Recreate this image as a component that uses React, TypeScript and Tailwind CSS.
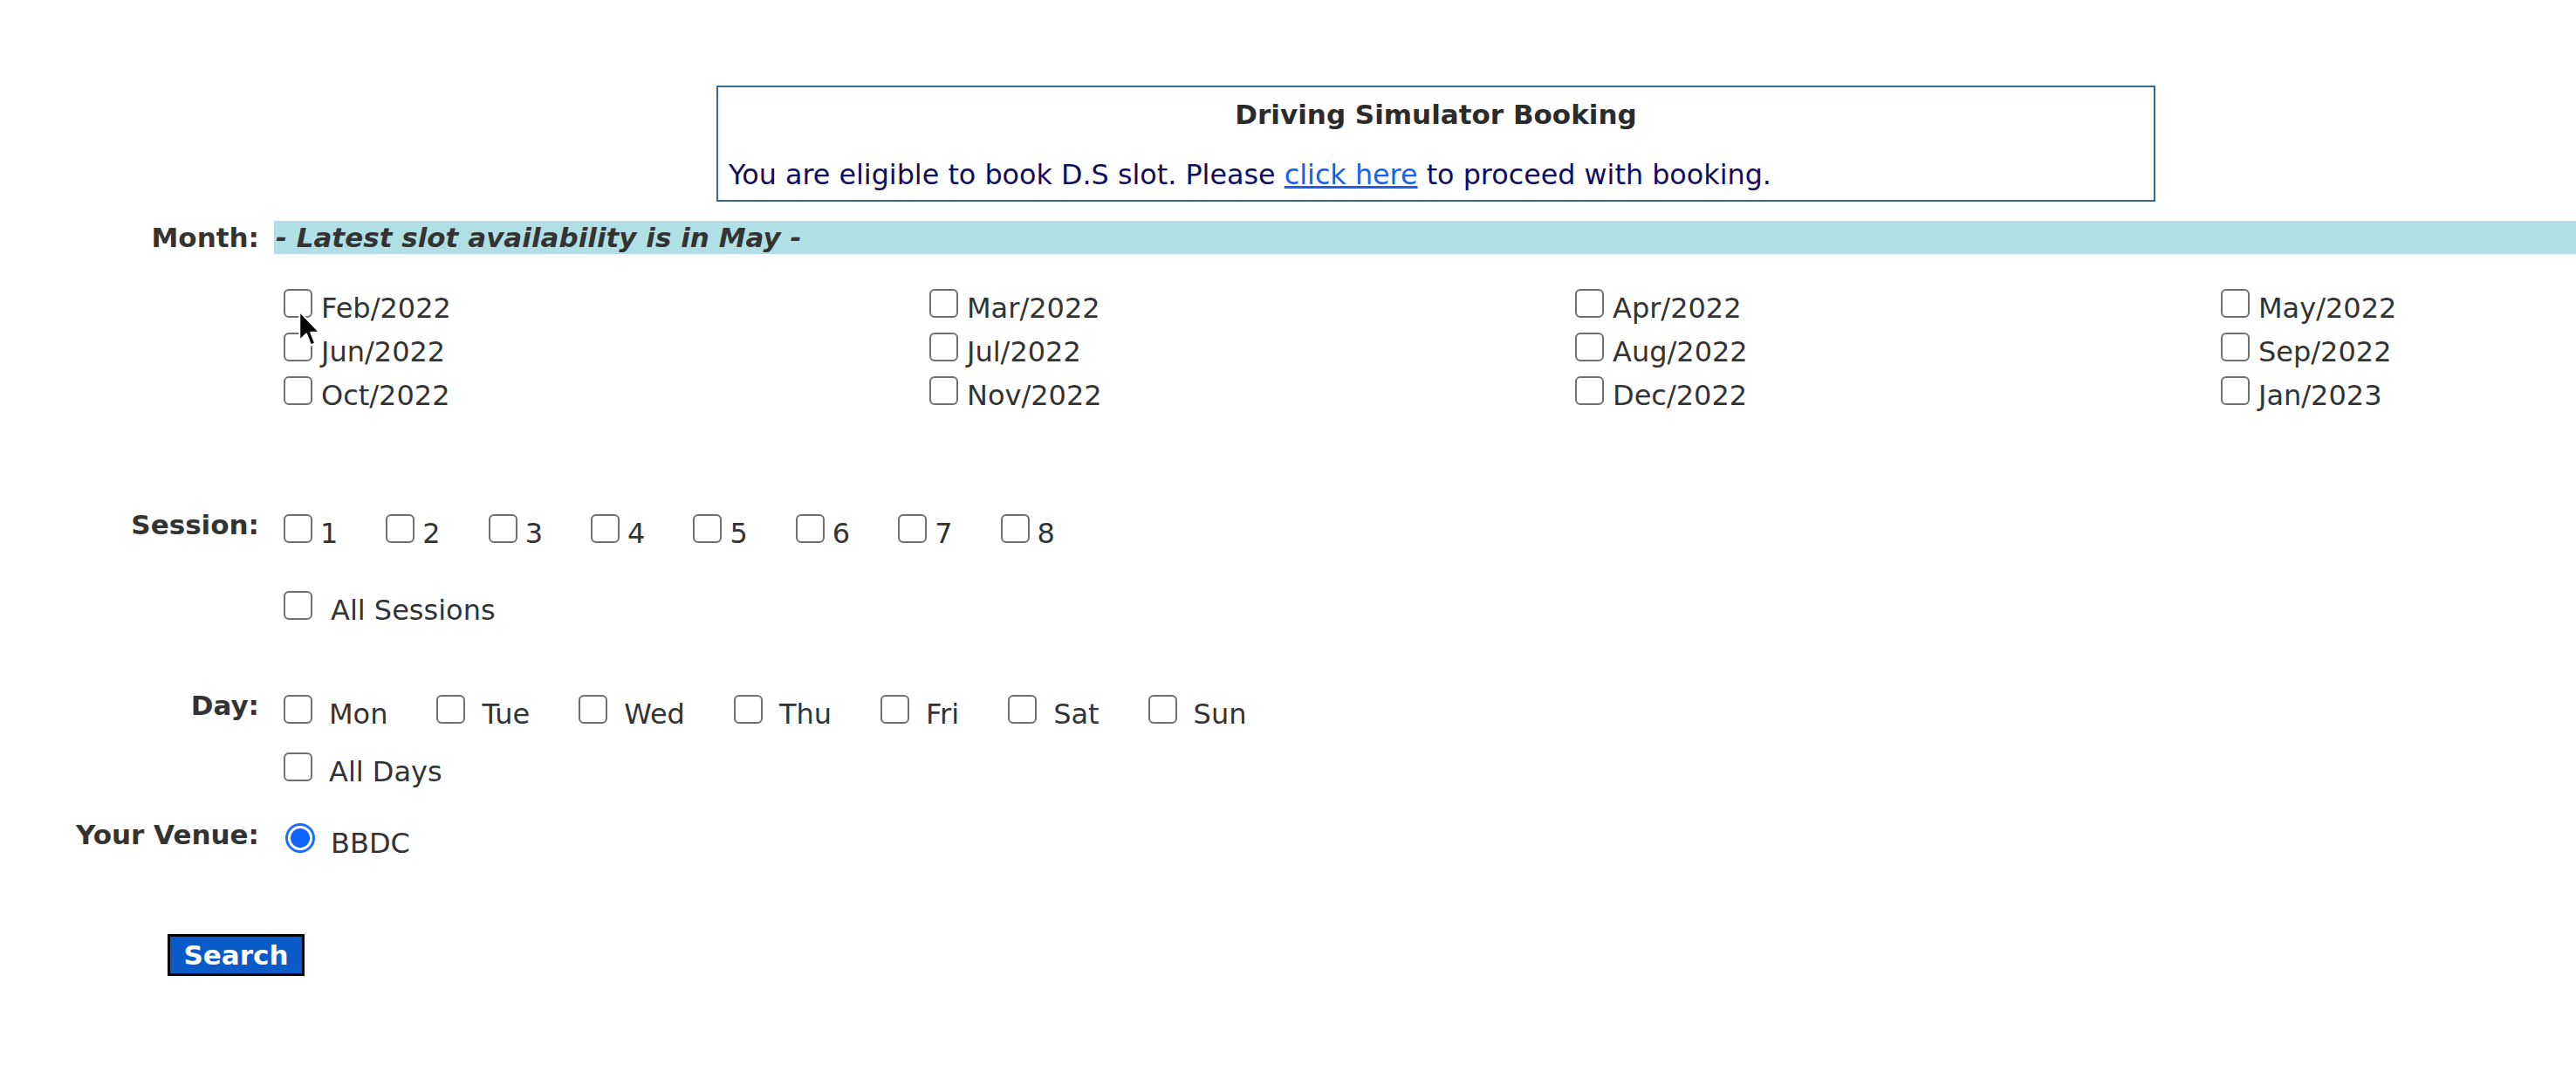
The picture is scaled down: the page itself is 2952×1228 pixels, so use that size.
import React from "react";

const months = [
  "Feb/2022", "Mar/2022", "Apr/2022", "May/2022",
  "Jun/2022", "Jul/2022", "Aug/2022", "Sep/2022",
  "Oct/2022", "Nov/2022", "Dec/2022", "Jan/2023",
];
const sessions = ["1", "2", "3", "4", "5", "6", "7", "8"];
const days = ["Mon", "Tue", "Wed", "Thu", "Fri", "Sat", "Sun"];

const cb =
  "appearance-none inline-block align-baseline w-[33px] h-[33px] border-2 border-[#707070] rounded-[6px] bg-white";

function Cursor() {
  return (
    <svg
      className="absolute left-[341px] top-[355px] w-[27px] h-[45px]"
      viewBox="0 0 24 40"
    >
      <path
        d="M2 1.5 L2 31 L9 24.5 L13.5 36 L18 34 L13.5 23 L22.5 23 Z"
        fill="#000"
        stroke="#fff"
        strokeWidth="1.8"
        strokeLinejoin="round"
      />
    </svg>
  );
}

export default function App() {
  return (
    <div className="relative w-full min-h-[1228px] overflow-hidden bg-white font-['DejaVu_Sans',Verdana,sans-serif] text-[32px] text-[#333]">
      <div className="pt-[98px]">
        <div className="ml-[821px] w-[1649px] h-[133px] border-2 border-[#2f6b94] pt-[13px]">
          <div className="text-center font-bold text-[31px] leading-[36px] text-[#2b2b2b]">
            Driving Simulator Booking
          </div>
          <div className="mt-[33px] pl-[12px] leading-[36px] text-[31.8px] text-[#110d5e] whitespace-nowrap">
            You are eligible to book D.S slot. Please{" "}
            <a href="#" className="text-[#1a5ff0] underline">
              click here
            </a>{" "}
            to proceed with booking.
          </div>
        </div>
      </div>

      {/* Month */}
      <div className="mt-[22px] flex items-center h-[38px]">
        <div className="w-[297px] shrink-0 text-right font-bold text-[31px] leading-[38px]">
          Month:
        </div>
        <div className="ml-[17px] flex-1 h-[38px] bg-[#b0e0e6] pl-[2px] font-bold italic text-[31px] leading-[38px] whitespace-nowrap">
          - Latest slot availability is in May -
        </div>
      </div>
      <div className="mt-[37px] ml-[325px] grid grid-cols-[740px_740px_740px_auto]">
        {months.map((m) => (
          <div key={m} className="h-[50px] leading-[50px] whitespace-nowrap">
            <input type="checkbox" className={`${cb} mr-[10px]`} />
            {m}
          </div>
        ))}
      </div>

      {/* Session */}
      <div className="mt-[105px] flex items-start">
        <div className="w-[297px] shrink-0 text-right font-bold text-[31px] leading-[36px]">
          Session:
        </div>
        <div className="ml-[17px] pl-[11px] flex-1">
          <div className="h-[56px] leading-[56px] whitespace-nowrap">
            {sessions.map((s) => (
              <span key={s} className="mr-[55px]">
                <input type="checkbox" className={`${cb} mr-[9px]`} />
                {s}
              </span>
            ))}
          </div>
          <div className="mt-[32px] h-[56px] leading-[56px] whitespace-nowrap">
            <input type="checkbox" className={`${cb} mr-[21px]`} />
            All Sessions
          </div>
        </div>
      </div>

      {/* Day */}
      <div className="mt-[63px] flex items-start">
        <div className="w-[297px] shrink-0 text-right font-bold text-[31px] leading-[36px]">
          Day:
        </div>
        <div className="ml-[17px] pl-[11px] flex-1">
          <div className="h-[56px] leading-[56px] whitespace-nowrap">
            {days.map((d) => (
              <span key={d} className="mr-[56px]">
                <input type="checkbox" className={`${cb} mr-[19px]`} />
                {d}
              </span>
            ))}
          </div>
          <div className="mt-[10px] h-[56px] leading-[56px] whitespace-nowrap">
            <input type="checkbox" className={`${cb} mr-[19px]`} />
            All Days
          </div>
        </div>
      </div>

      {/* Venue */}
      <div className="mt-[26px] flex items-start">
        <div className="w-[297px] shrink-0 text-right font-bold text-[31px] leading-[36px]">
          Your Venue:
        </div>
        <div className="ml-[17px] pl-[13px] flex-1">
          <div className="h-[56px] leading-[56px] whitespace-nowrap">
            <input
              type="radio"
              defaultChecked
              name="venue"
              className="appearance-none inline-block align-baseline w-[34px] h-[34px] rounded-full border-[3px] border-[#1f6ef7] bg-[radial-gradient(circle,#0f64f7_0px,#0f64f7_10.5px,#ffffff_11.5px)] mr-[18px]"
            />
            BBDC
          </div>
        </div>
      </div>

      {/* Search */}
      <div className="mt-[76px] ml-[192px]">
        <button className="w-[157px] h-[48px] border-[3px] border-black bg-[#0a5ac8] text-white font-bold text-[31px] leading-none flex items-center justify-center">
          Search
        </button>
      </div>

      <Cursor />
    </div>
  );
}
